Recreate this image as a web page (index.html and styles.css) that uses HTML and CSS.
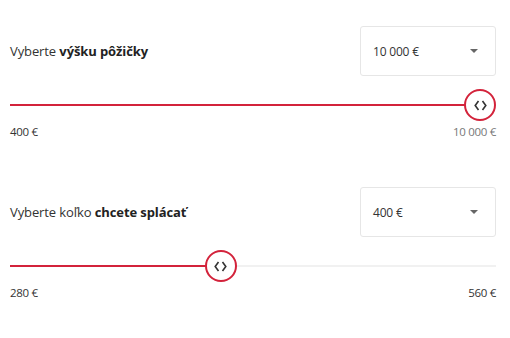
FILE: index.html
```html
<!DOCTYPE html>
<html lang="sk">
<head>
<meta charset="utf-8">
<link rel="stylesheet" href="styles.css">
</head>
<body>
<div class="calc">
  <section class="field">
    <div class="row">
      <div class="label">Vyberte <b>výšku pôžičky</b></div>
      <div class="select"><span>10 000 €</span><i class="caret"></i></div>
    </div>
    <div class="slider">
      <div class="track"><div class="fill" style="width: calc(16px + (100% - 32px) * 1)"></div></div>
      <div class="thumb" style="left: calc((100% - 32px) * 1)">
        <svg width="13" height="11" viewBox="0 0 13 11"><path d="M4.5 1 L1.2 5.5 L4.5 10 M8.5 1 L11.8 5.5 L8.5 10" fill="none" stroke="#333" stroke-width="1.6"/></svg>
      </div>
    </div>
    <div class="limits"><span>400 €</span><span class="max">10 000 €</span></div>
  </section>
  <section class="field second">
    <div class="row">
      <div class="label">Vyberte koľko <b>chcete splácať</b></div>
      <div class="select"><span>400 €</span><i class="caret"></i></div>
    </div>
    <div class="slider">
      <div class="track"><div class="fill" style="width: calc(16px + (100% - 32px) * 0.4286)"></div></div>
      <div class="thumb" style="left: calc((100% - 32px) * 0.4286)">
        <svg width="13" height="11" viewBox="0 0 13 11"><path d="M4.5 1 L1.2 5.5 L4.5 10 M8.5 1 L11.8 5.5 L8.5 10" fill="none" stroke="#333" stroke-width="1.6"/></svg>
      </div>
    </div>
    <div class="limits"><span>280 €</span><span>560 €</span></div>
  </section>
</div>
</body>
</html>
```

FILE: styles.css
```css
html, body {
  margin: 0;
  padding: 0;
  background: #fff;
}
body {
  font-family: "Open Sans", "Liberation Sans", sans-serif;
  color: #333;
  font-size: 13px;
}
.calc {
  padding: 26px 14px 0 10px;
}
.field.second {
  margin-top: 47px;
}
.row {
  display: flex;
  justify-content: space-between;
  align-items: center;
  height: 50px;
}
.label {
  font-size: 13px;
  letter-spacing: -0.1px;
}
.label b {
  font-weight: 700;
  color: #222;
}
.select {
  box-sizing: border-box;
  width: 136px;
  height: 50px;
  border: 1px solid #e6e6e6;
  border-radius: 3px;
  display: flex;
  align-items: center;
  justify-content: space-between;
  padding: 0 17px 0 12px;
  font-size: 12px;
  letter-spacing: -0.2px;
}
.caret {
  width: 0;
  height: 0;
  border-left: 4.5px solid transparent;
  border-right: 4.5px solid transparent;
  border-top: 4.5px solid #666;
}
.slider {
  position: relative;
  height: 32px;
  margin-top: 13px;
  display: flex;
  align-items: center;
}
.track {
  flex: 1;
  height: 2px;
  background: #f1f1f1;
  position: relative;
}
.fill {
  height: 2px;
  background: #d3233b;
}
.thumb {
  position: absolute;
  top: 0;
  box-sizing: border-box;
  width: 32px;
  height: 32px;
  border: 2px solid #d3233b;
  border-radius: 50%;
  background: #fff;
  display: flex;
  align-items: center;
  justify-content: center;
}
.limits {
  display: flex;
  justify-content: space-between;
  margin-top: 3px;
  font-size: 11.5px;
  line-height: 16px;
  letter-spacing: -0.3px;
  color: #333;
}
.limits .max {
  color: #777;
}
```
